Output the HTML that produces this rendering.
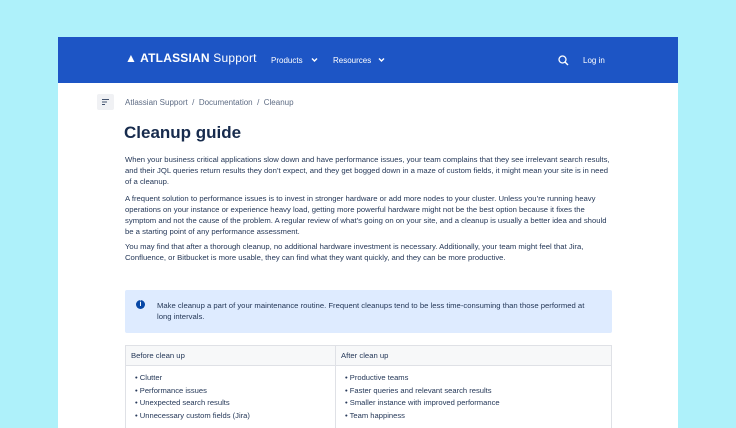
<!DOCTYPE html>
<html><head><meta charset="utf-8"><style>
*{margin:0;padding:0;box-sizing:border-box}
html,body{width:736px;height:428px;overflow:hidden}
body{background:#aef1fa;font-family:"Liberation Sans",sans-serif;position:relative;color:#172b4d}
.page{position:absolute;left:58px;top:37px;width:620px;height:391px;background:#fff}
.hdr{position:absolute;left:0;top:0;width:620px;height:46px;background:#1d55c5;color:#fff}
.a{position:absolute;white-space:nowrap}
.p{position:absolute;left:67px;white-space:nowrap;font-size:7.7px;color:#253858}
</style></head><body>
<div class="page">
 <div class="hdr">
  <div class="a" style="left:67px;top:14px;font-size:12px;font-weight:bold;letter-spacing:0.2px">&#x25B2; ATLASSIAN <span style="font-weight:normal">Support</span></div>
  <div class="a" style="left:213px;top:19px;font-size:8px">Products</div>
  <svg class="a" style="left:253px;top:20px" width="7" height="6"><path d="M1 1.5L3.5 4 6 1.5" stroke="#fff" stroke-width="1.4" fill="none"/></svg>
  <div class="a" style="left:275px;top:19px;font-size:8px">Resources</div>
  <svg class="a" style="left:320px;top:20px" width="7" height="6"><path d="M1 1.5L3.5 4 6 1.5" stroke="#fff" stroke-width="1.4" fill="none"/></svg>
  <svg class="a" style="left:500px;top:18px" width="11" height="11"><circle cx="4.5" cy="4.5" r="3.5" stroke="#fff" stroke-width="1.3" fill="none"/><path d="M7 7L10 10" stroke="#fff" stroke-width="1.4"/></svg>
  <div class="a" style="left:525px;top:19px;font-size:8px">Log in</div>
 </div>
 <div class="a" style="left:39px;top:57px;width:17px;height:16px;background:#f0f1f4;border-radius:2px"></div>
 <svg class="a" style="left:44px;top:62px" width="8" height="6"><path d="M0 .5H7M0 3H5M0 5.5H3" stroke="#42526e" stroke-width="1"/></svg>
 <div class="a" style="left:67px;top:61px;font-size:8px;color:#5e6c84">Atlassian Support &nbsp;/&nbsp; Documentation &nbsp;/&nbsp; Cleanup</div>
 <div class="a" style="left:66px;top:86px;font-size:17px;font-weight:bold;color:#172b4d">Cleanup guide</div>
 <div class="p" style="top:118px">When your business critical applications slow down and have performance issues, your team complains that they see irrelevant search results,</div>
 <div class="p" style="top:129px">and their JQL queries return results they don’t expect, and they get bogged down in a maze of custom fields, it might mean your site is in need</div>
 <div class="p" style="top:140px">of a cleanup.</div>
 <div class="p" style="top:157px">A frequent solution to performance issues is to invest in stronger hardware or add more nodes to your cluster. Unless you’re running heavy</div>
 <div class="p" style="top:168px">operations on your instance or experience heavy load, getting more powerful hardware might not be the best option because it fixes the</div>
 <div class="p" style="top:179px">symptom and not the cause of the problem. A regular review of what’s going on on your site, and a cleanup is usually a better idea and should</div>
 <div class="p" style="top:190px">be a starting point of any performance assessment.</div>
 <div class="p" style="top:205px">You may find that after a thorough cleanup, no additional hardware investment is necessary. Additionally, your team might feel that Jira,</div>
 <div class="p" style="top:216px">Confluence, or Bitbucket is more usable, they can find what they want quickly, and they can be more productive.</div>
 <div class="a" style="left:67px;top:253px;width:487px;height:43px;background:#deebff;border-radius:2px"></div>
 <div class="a" style="left:78px;top:263px;width:9px;height:9px;border-radius:50%;background:#0747a6;color:#fff;font-size:7px;font-weight:bold;text-align:center;line-height:9px">i</div>
 <div class="p" style="left:99px;top:264px">Make cleanup a part of your maintenance routine. Frequent cleanups tend to be less time-consuming than those performed at</div>
 <div class="p" style="left:99px;top:275px">long intervals.</div>
 <div class="a" style="left:67px;top:308px;width:487px;height:100px;border:1px solid #dfe1e6"></div>
 <div class="a" style="left:68px;top:309px;width:485px;height:20px;background:#f7f8f9;border-bottom:1px solid #dfe1e6"></div>
 <div class="a" style="left:277px;top:308px;width:1px;height:100px;background:#dfe1e6"></div>
 <div class="p" style="left:73px;top:314px">Before clean up</div>
 <div class="p" style="left:283px;top:314px">After clean up</div>
 <div class="p" style="left:77px;top:335px;line-height:12.7px;font-size:7.6px">• Clutter<br>• Performance issues<br>• Unexpected search results<br>• Unnecessary custom fields (Jira)</div>
 <div class="p" style="left:287px;top:335px;line-height:12.7px;font-size:7.6px">• Productive teams<br>• Faster queries and relevant search results<br>• Smaller instance with improved performance<br>• Team happiness</div>
</div>
</body></html>
